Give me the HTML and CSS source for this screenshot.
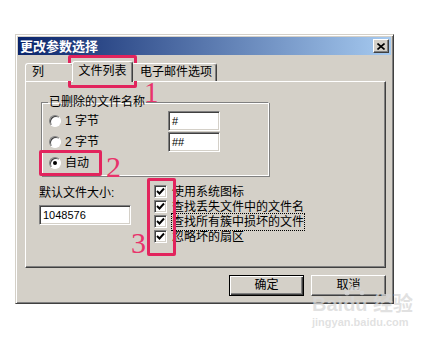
FILE: index.html
```html
<!DOCTYPE html>
<html>
<head>
<meta charset="utf-8">
<link rel="stylesheet" href="styles.css">
</head>
<body>
<div class="stage">
  <div class="dialog">
    <div class="titlebar">
      <span class="title">更改参数选择</span>
      <span class="close"><svg width="8" height="7" viewBox="0 0 8 7"><path d="M0.5 0.5 L7.5 6.5 M7.5 0.5 L0.5 6.5" stroke="#000" stroke-width="1.6" fill="none"/></svg></span>
    </div>
    <div class="content">
      <div class="tabs">
        <div class="tab tab1">列</div>
        <div class="tab tab2 active">文件列表</div>
        <div class="tab tab3">电子邮件选项</div>
      </div>
      <div class="panel">
        <fieldset class="group">
          <legend class="legend">已删除的文件名称</legend>
          <div class="row">
            <span class="opt"><span class="radio"></span><span class="opt-text">1 字节</span></span>
            <span class="field small">#</span>
          </div>
          <div class="row">
            <span class="opt"><span class="radio"></span><span class="opt-text">2 字节</span></span>
            <span class="field small">##</span>
          </div>
          <div class="row">
            <span class="opt"><span class="radio checked"></span><span class="opt-text">自动</span></span>
          </div>
        </fieldset>
        <div class="lower">
          <div class="left">
            <div class="label">默认文件大小:</div>
            <div class="field wide">1048576</div>
          </div>
          <div class="checks">
            <div class="check-row"><span class="box"><svg width="9" height="9" viewBox="0 0 9 9"><polyline points="1,4 3.5,6.5 8,1.5" stroke="#000" stroke-width="1.9" fill="none"/></svg></span><span>使用系统图标</span></div>
            <div class="check-row"><span class="box"><svg width="9" height="9" viewBox="0 0 9 9"><polyline points="1,4 3.5,6.5 8,1.5" stroke="#000" stroke-width="1.9" fill="none"/></svg></span><span>查找丢失文件中的文件名</span></div>
            <div class="check-row"><span class="box"><svg width="9" height="9" viewBox="0 0 9 9"><polyline points="1,4 3.5,6.5 8,1.5" stroke="#000" stroke-width="1.9" fill="none"/></svg></span><span class="focus">查找所有簇中损坏的文件</span></div>
            <div class="check-row"><span class="box"><svg width="9" height="9" viewBox="0 0 9 9"><polyline points="1,4 3.5,6.5 8,1.5" stroke="#000" stroke-width="1.9" fill="none"/></svg></span><span>忽略坏的扇区</span></div>
          </div>
        </div>
      </div>
      <div class="buttons">
        <div class="btn default">确定</div>
        <div class="btn">取消</div>
      </div>
    </div>
  </div>
</div>

<div class="mark box-1"></div>
<div class="mark box-2"></div>
<div class="mark box-3"></div>
<div class="num num-1">1</div>
<div class="num num-2">2</div>
<div class="num num-3">3</div>

<div class="watermark">
  <div class="wm-big">Bai<span class="wm-du"><svg class="paw" width="22" height="12" viewBox="0 0 22 12"><circle cx="4" cy="8" r="2.5"/><circle cx="9" cy="3.5" r="2.5"/><circle cx="15" cy="3.5" r="2.5"/><circle cx="19" cy="8" r="2.3"/></svg>du</span> 经验</div>
  <div class="wm-small">jingyan.baidu.com</div>
</div>
</body>
</html>
```

FILE: styles.css
```css
body {
  margin: 0;
  width: 429px;
  height: 341px;
  background: #fff;
  position: relative;
  overflow: hidden;
  font-family: "Liberation Sans", "Noto Sans CJK SC", sans-serif;
  font-size: 12px;
  line-height: 16px;
  color: #000;
}

.stage {
  padding: 34px 0 0 15px;
}

.dialog {
  width: 379px;
  height: 270px;
  box-sizing: border-box;
  background: #d4d0c8;
  border: 1px solid;
  border-color: #d4d0c8 #404040 #404040 #d4d0c8;
  box-shadow: inset 1px 1px 0 #fff, inset -1px -1px 0 #808080;
  padding: 2px;
  display: flex;
  flex-direction: column;
}

.titlebar {
  height: 18px;
  flex: none;
  background: linear-gradient(to right, #0a246a, #a6caf0);
  display: flex;
  align-items: center;
  justify-content: space-between;
  padding: 0 2px;
}

.title {
  color: #fff;
  font-weight: bold;
  font-size: 13px;
  line-height: 18px;
  font-family: "Noto Sans CJK SC", sans-serif;
}

.close {
  width: 16px;
  height: 14px;
  box-sizing: border-box;
  background: #d4d0c8;
  border: 1px solid;
  border-color: #fff #404040 #404040 #fff;
  box-shadow: inset -1px -1px 0 #808080;
  display: flex;
  align-items: center;
  justify-content: center;
}

.content {
  flex: 1;
  padding: 6px 5px 0 7px;
  display: flex;
  flex-direction: column;
}

.tabs {
  display: flex;
  align-items: flex-end;
  height: 20px;
  position: relative;
  z-index: 1;
}

.tab {
  height: 18px;
  box-sizing: border-box;
  border: 1px solid;
  border-bottom: none;
  border-color: #fff #404040 transparent #fff;
  box-shadow: inset -1px 0 0 #808080;
  border-radius: 3px 3px 0 0;
  background: #d4d0c8;
  line-height: 16px;
}

.tab1 {
  width: 49px;
  padding-left: 6px;
}

.tab2 {
  width: 61px;
  margin: 0 -2px;
  text-align: center;
  position: relative;
  z-index: 2;
}

.tab3 {
  width: 86px;
  padding-left: 8px;
}

.tab.active {
  height: 21px;
  margin-bottom: -1px;
  padding-top: 1px;
}

.panel {
  height: 187px;
  box-sizing: border-box;
  border: 1px solid;
  border-color: #fff #404040 #404040 #fff;
  box-shadow: inset -1px -1px 0 #808080;
}

.group {
  margin: 12px 0 0 15px;
  padding: 0 0 2px 0;
  width: 228px;
  box-sizing: border-box;
  min-width: 0;
  border: 1px solid;
  border-color: #808080 #fff #fff #808080;
  box-shadow: inset 1px 1px 0 #fff, 1px 1px 0 #808080;
}

.legend {
  margin-left: 6px;
  padding: 0 1px;
  line-height: 16px;
}

.row {
  height: 21px;
  display: flex;
  align-items: center;
  padding-left: 7px;
}

.opt {
  width: 119px;
  display: flex;
  align-items: center;
  gap: 4px;
}

.radio {
  width: 12px;
  height: 12px;
  box-sizing: border-box;
  border-radius: 50%;
  border: 1px solid;
  border-color: #808080 #fff #fff #808080;
  box-shadow: inset 1px 1px 0 #404040;
  background: #fff;
  display: flex;
  align-items: center;
  justify-content: center;
}

.radio.checked::after {
  content: "";
  width: 4px;
  height: 4px;
  border-radius: 50%;
  background: #000;
}

.field {
  box-sizing: border-box;
  height: 20px;
  background: #fff;
  border: 1px solid;
  border-color: #808080 #fff #fff #808080;
  box-shadow: inset 1px 1px 0 #404040, inset -1px -1px 0 #d4d0c8;
  padding: 0 3px;
  line-height: 18px;
  font-size: 11px;
}

.field.small {
  width: 52px;
}

.field.wide {
  width: 92px;
  margin-top: 4px;
}

.lower {
  display: flex;
  margin-top: 8px;
  padding-left: 13px;
}

.left {
  width: 115px;
}

.label {
  padding-top: 1px;
}

.checks {
  display: flex;
  flex-direction: column;
}

.check-row {
  height: 15px;
  display: flex;
  align-items: center;
  gap: 5px;
  white-space: nowrap;
}

.box {
  width: 13px;
  height: 13px;
  box-sizing: border-box;
  border: 1px solid;
  border-color: #808080 #fff #fff #808080;
  box-shadow: inset 1px 1px 0 #404040, inset -1px -1px 0 #d4d0c8;
  background: #fff;
  display: flex;
  align-items: center;
  justify-content: center;
}

.focus {
  outline: 1px dotted #000;
  outline-offset: 0;
}

.buttons {
  display: flex;
  justify-content: flex-end;
  gap: 7px;
  margin-top: 7px;
}

.btn {
  width: 75px;
  height: 21px;
  box-sizing: border-box;
  background: #d4d0c8;
  border: 1px solid;
  border-color: #fff #404040 #404040 #fff;
  box-shadow: inset -1px -1px 0 #808080;
  line-height: 19px;
  text-align: center;
}

.btn.default {
  border-color: #000;
  box-shadow: inset 1px 1px 0 #fff, inset -1px -1px 0 #404040, inset -2px -2px 0 #808080;
}

.mark {
  position: absolute;
  box-sizing: border-box;
  border: 3px solid #e2245d;
  border-radius: 2px;
}

.box-1 { left: 68px; top: 55px; width: 69px; height: 33px; }
.box-2 { left: 39px; top: 150px; width: 63px; height: 26px; }
.box-3 { left: 147px; top: 178px; width: 29px; height: 78px; }

.num {
  position: absolute;
  font-family: "Liberation Serif", serif;
  color: #e8336b;
  line-height: 1;
}

.num-1 { left: 144px; top: 78px; font-size: 29px; }
.num-2 { left: 106px; top: 152px; font-size: 30px; }
.num-3 { left: 131px; top: 228px; font-size: 30px; }

.watermark {
  position: absolute;
  left: 312px;
  top: 292px;
  color: rgba(215, 215, 215, 0.75);
  pointer-events: none;
}

.wm-big {
  font-family: "Liberation Sans", "Noto Sans CJK SC", sans-serif;
  font-weight: bold;
  font-size: 20px;
  line-height: 24px;
  white-space: nowrap;
}

.wm-du {
  position: relative;
}

.paw {
  position: absolute;
  left: 0;
  top: -8px;
  fill: rgba(215, 215, 215, 0.75);
}

.wm-small {
  font-size: 11px;
  line-height: 12px;
  font-weight: bold;
}
```
